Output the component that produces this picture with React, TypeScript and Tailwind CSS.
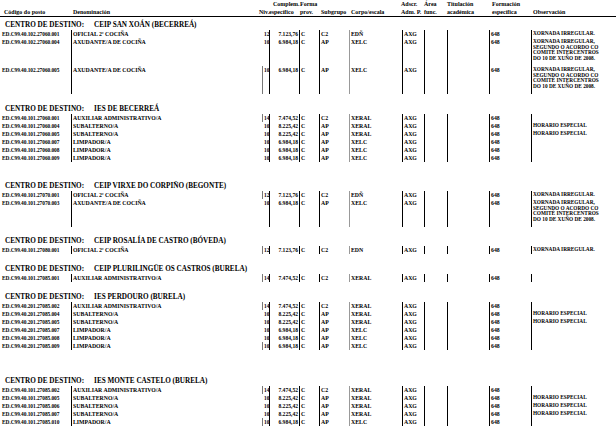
import clsx from "clsx";

type Row = {
  code: string;
  name: string;
  niv: string;
  comp: string;
  sub: string;
  corpo: string;
  obs?: string[];
  tall?: boolean;
  nivBar?: boolean;
};

type Section = { title: string; gap: string; rows: Row[] };

const COLS =
  "grid-cols-[71px_191px_7px_30px_20px_30px_53px_22px_23px_42px_42px_85px]";

const LONG_OBS = [
  "XORNADA IRREGULAR,",
  "SEGUNDO O ACORDO CO",
  "COMITÉ INTERCENTROS",
  "DO 10 DE XUÑO DE 2008.",
];

const oficial = (code: string, corpo = "EDÑ"): Row => ({
  code,
  name: "OFICIAL 2ª COCIÑA",
  niv: "12",
  comp: "7.123,76",
  sub: "C2",
  corpo,
  obs: ["XORNADA IRREGULAR."],
});

const axudante = (code: string): Row => ({
  code,
  name: "AXUDANTE/A DE COCIÑA",
  niv: "10",
  comp: "6.984,18",
  sub: "AP",
  corpo: "XELC",
  obs: LONG_OBS,
  tall: true,
});

const auxiliar = (code: string): Row => ({
  code,
  name: "AUXILIAR ADMINISTRATIVO/A",
  niv: "14",
  comp: "7.474,52",
  sub: "C2",
  corpo: "XERAL",
});

const subalterno = (code: string): Row => ({
  code,
  name: "SUBALTERNO/A",
  niv: "10",
  comp: "8.225,42",
  sub: "AP",
  corpo: "XERAL",
  obs: ["HORARIO ESPECIAL"],
});

const limpador = (code: string): Row => ({
  code,
  name: "LIMPADOR/A",
  niv: "10",
  comp: "6.984,18",
  sub: "AP",
  corpo: "XELC",
});

const sections: Section[] = [
  {
    title: "CEIP SAN XOÁN (BECERREÁ)",
    gap: "mt-[3px]",
    rows: [
      oficial("ED.C99.40.102.27060.001"),
      axudante("ED.C99.40.102.27060.004"),
      { ...axudante("ED.C99.40.102.27060.005"), nivBar: true },
    ],
  },
  {
    title: "IES DE BECERREÁ",
    gap: "mt-[10px]",
    rows: [
      { ...auxiliar("ED.C99.40.101.27060.001"), nivBar: true },
      subalterno("ED.C99.40.101.27060.004"),
      subalterno("ED.C99.40.101.27060.005"),
      limpador("ED.C99.40.101.27060.007"),
      limpador("ED.C99.40.101.27060.008"),
      limpador("ED.C99.40.101.27060.009"),
    ],
  },
  {
    title: "CEIP VIRXE DO CORPIÑO (BEGONTE)",
    gap: "mt-[19px]",
    rows: [
      { ...oficial("ED.C99.40.101.27070.001"), nivBar: true },
      axudante("ED.C99.40.101.27070.003"),
    ],
  },
  {
    title: "CEIP ROSALÍA DE CASTRO (BÓVEDA)",
    gap: "mt-[9px]",
    rows: [{ ...oficial("ED.C99.40.101.27080.001", "EDN"), nivBar: true }],
  },
  {
    title: "CEIP PLURILINGÜE OS CASTROS (BURELA)",
    gap: "mt-[10px]",
    rows: [{ ...auxiliar("ED.C99.40.101.27085.001"), nivBar: true }],
  },
  {
    title: "IES PERDOURO (BURELA)",
    gap: "mt-[10px]",
    rows: [
      { ...auxiliar("ED.C99.40.201.27085.002"), nivBar: true },
      subalterno("ED.C99.40.201.27085.004"),
      subalterno("ED.C99.40.201.27085.005"),
      limpador("ED.C99.40.201.27085.007"),
      limpador("ED.C99.40.201.27085.008"),
      { ...limpador("ED.C99.40.201.27085.009"), nivBar: true },
    ],
  },
  {
    title: "IES MONTE CASTELO (BURELA)",
    gap: "mt-[26px]",
    rows: [
      { ...auxiliar("ED.C99.40.101.27085.002"), nivBar: true },
      subalterno("ED.C99.40.101.27085.005"),
      subalterno("ED.C99.40.101.27085.006"),
      subalterno("ED.C99.40.101.27085.007"),
      { ...limpador("ED.C99.40.101.27085.010"), nivBar: true },
    ],
  },
];

function Header() {
  const cell = "flex flex-col justify-end whitespace-nowrap";
  return (
    <div
      className={clsx(
        "grid h-[17px] border-b border-black pt-[1px] text-[6px] leading-[7.5px]",
        COLS
      )}
    >
      <div className={clsx(cell, "pl-[4px]")}>Código do posto</div>
      <div className={clsx(cell, "pl-[2px]")}>Denominación</div>
      <div className={clsx(cell, "-ml-[3px]")}>Niv.</div>
      <div className={cell}>
        <span className="pl-[4px]">Complem.</span>
        <span>específico</span>
      </div>
      <div className={clsx(cell, "pl-[1px]")}>
        <span>Forma</span>
        <span>prov.</span>
      </div>
      <div className={clsx(cell, "pl-[2px]")}>Subgrupo</div>
      <div className={clsx(cell, "pl-[2px]")}>Corpo/escala</div>
      <div className={clsx(cell, "-ml-[1px]")}>
        <span>Adscr.</span>
        <span>Adm. P.</span>
      </div>
      <div className={cell}>
        <span>Área</span>
        <span>func.</span>
      </div>
      <div className={cell}>
        <span>Titulación</span>
        <span>académica</span>
      </div>
      <div className={clsx(cell, "pl-[3px]")}>
        <span>Formación</span>
        <span>específica</span>
      </div>
      <div className={clsx(cell, "pl-[2px]")}>Observación</div>
    </div>
  );
}

function TableRow({ row }: { row: Row }) {
  const bar = "border-l border-black";
  return (
    <div
      className={clsx(
        "grid text-[5.8px] leading-[8px]",
        COLS,
        row.tall ? "h-[28px]" : "h-[8px]"
      )}
    >
      <div className="whitespace-nowrap pl-[2px] text-[5.4px] tracking-[-0.05px]">
        {row.code}
      </div>
      <div className={clsx(bar, "whitespace-nowrap pl-[1px]")}>{row.name}</div>
      <div
        className={clsx(
          "whitespace-nowrap border-l pl-[1px] text-[5.4px]",
          row.nivBar ? "border-[#777]" : "border-transparent"
        )}
      >
        {row.niv}
      </div>
      <div className={clsx(bar, "pr-[1px] text-right text-[5.6px]")}>{row.comp}</div>
      <div className={clsx(bar, "pl-[1px]")}>C</div>
      <div className={clsx(bar, "pl-[1px]")}>{row.sub}</div>
      <div className="border-l border-[#999] pl-[1px]">{row.corpo}</div>
      <div className={clsx(bar, "pl-[1px]")}>AXG</div>
      <div className={bar} />
      <div className={bar} />
      <div className={clsx(bar, "pl-[1px]")}>648</div>
      <div
        className={clsx(
          bar,
          "flex flex-col whitespace-nowrap pl-[1px] pt-[1px] text-[5.3px] leading-[5.5px]"
        )}
      >
        {row.obs?.map((line) => (
          <span key={line}>{line}</span>
        ))}
      </div>
    </div>
  );
}

export default function App() {
  return (
    <div className="h-[439px] w-[616px] overflow-hidden bg-white font-[family-name:Liberation_Serif,serif] font-bold text-black">
      <Header />
      {sections.map((s) => (
        <section key={s.title} className={s.gap}>
          <div className="h-[10px] whitespace-nowrap pl-[5px] text-[7.2px] leading-[10px]">
            CENTRO DE DESTINO:
            <span className="ml-[10px]">{s.title}</span>
          </div>
          {s.rows.map((r) => (
            <TableRow key={r.code} row={r} />
          ))}
        </section>
      ))}
    </div>
  );
}
